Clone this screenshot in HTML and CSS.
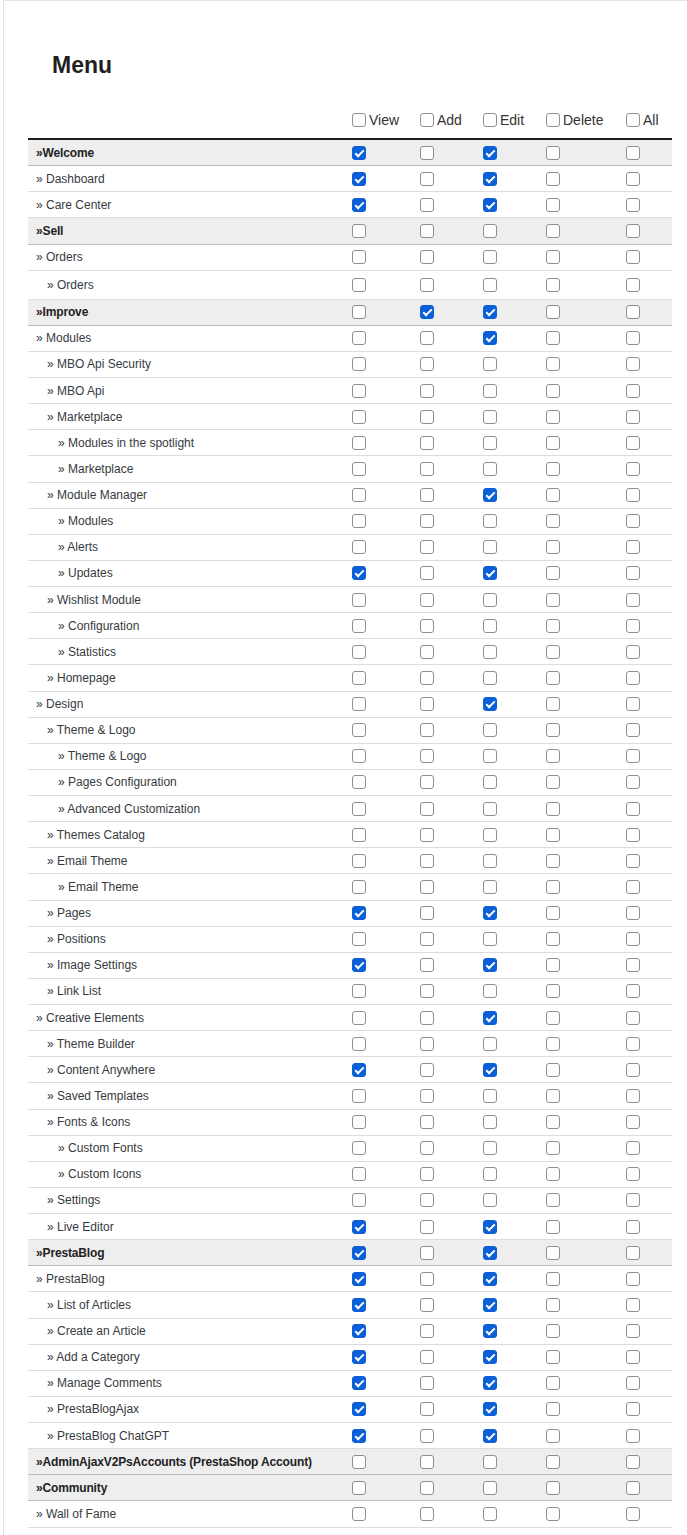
FILE: index.html
```html
<!DOCTYPE html>
<html>
<head>
<meta charset="utf-8">
<title>Menu</title>
<link rel="stylesheet" href="styles.css">
</head>
<body>
<div class="card">
  <h2 class="title">Menu</h2>
  <div class="perm">
    <div class="row head">
      <div class="name"></div>
      <label class="hcell"><input type="checkbox" class="cb"><span>View</span></label>
      <label class="hcell"><input type="checkbox" class="cb"><span>Add</span></label>
      <label class="hcell"><input type="checkbox" class="cb"><span>Edit</span></label>
      <label class="hcell"><input type="checkbox" class="cb"><span>Delete</span></label>
      <label class="hcell"><input type="checkbox" class="cb"><span>All</span></label>
    </div>

    <div class="row group"><div class="name">»Welcome</div><div class="c"><input type="checkbox" class="cb" checked></div><div class="c"><input type="checkbox" class="cb"></div><div class="c"><input type="checkbox" class="cb" checked></div><div class="c"><input type="checkbox" class="cb"></div><div class="c"><input type="checkbox" class="cb"></div></div>
    <div class="row l1"><div class="name">» Dashboard</div><div class="c"><input type="checkbox" class="cb" checked></div><div class="c"><input type="checkbox" class="cb"></div><div class="c"><input type="checkbox" class="cb" checked></div><div class="c"><input type="checkbox" class="cb"></div><div class="c"><input type="checkbox" class="cb"></div></div>
    <div class="row l1"><div class="name">» Care Center</div><div class="c"><input type="checkbox" class="cb" checked></div><div class="c"><input type="checkbox" class="cb"></div><div class="c"><input type="checkbox" class="cb" checked></div><div class="c"><input type="checkbox" class="cb"></div><div class="c"><input type="checkbox" class="cb"></div></div>

    <div class="row group"><div class="name">»Sell</div><div class="c"><input type="checkbox" class="cb"></div><div class="c"><input type="checkbox" class="cb"></div><div class="c"><input type="checkbox" class="cb"></div><div class="c"><input type="checkbox" class="cb"></div><div class="c"><input type="checkbox" class="cb"></div></div>
    <div class="row l1"><div class="name">» Orders</div><div class="c"><input type="checkbox" class="cb"></div><div class="c"><input type="checkbox" class="cb"></div><div class="c"><input type="checkbox" class="cb"></div><div class="c"><input type="checkbox" class="cb"></div><div class="c"><input type="checkbox" class="cb"></div></div>
    <div class="row l2 tall"><div class="name">» Orders</div><div class="c"><input type="checkbox" class="cb"></div><div class="c"><input type="checkbox" class="cb"></div><div class="c"><input type="checkbox" class="cb"></div><div class="c"><input type="checkbox" class="cb"></div><div class="c"><input type="checkbox" class="cb"></div></div>

    <div class="row group"><div class="name">»Improve</div><div class="c"><input type="checkbox" class="cb"></div><div class="c"><input type="checkbox" class="cb" checked></div><div class="c"><input type="checkbox" class="cb" checked></div><div class="c"><input type="checkbox" class="cb"></div><div class="c"><input type="checkbox" class="cb"></div></div>
    <div class="row l1"><div class="name">» Modules</div><div class="c"><input type="checkbox" class="cb"></div><div class="c"><input type="checkbox" class="cb"></div><div class="c"><input type="checkbox" class="cb" checked></div><div class="c"><input type="checkbox" class="cb"></div><div class="c"><input type="checkbox" class="cb"></div></div>
    <div class="row l2"><div class="name">» MBO Api Security</div><div class="c"><input type="checkbox" class="cb"></div><div class="c"><input type="checkbox" class="cb"></div><div class="c"><input type="checkbox" class="cb"></div><div class="c"><input type="checkbox" class="cb"></div><div class="c"><input type="checkbox" class="cb"></div></div>
    <div class="row l2"><div class="name">» MBO Api</div><div class="c"><input type="checkbox" class="cb"></div><div class="c"><input type="checkbox" class="cb"></div><div class="c"><input type="checkbox" class="cb"></div><div class="c"><input type="checkbox" class="cb"></div><div class="c"><input type="checkbox" class="cb"></div></div>
    <div class="row l2"><div class="name">» Marketplace</div><div class="c"><input type="checkbox" class="cb"></div><div class="c"><input type="checkbox" class="cb"></div><div class="c"><input type="checkbox" class="cb"></div><div class="c"><input type="checkbox" class="cb"></div><div class="c"><input type="checkbox" class="cb"></div></div>
    <div class="row l3"><div class="name">» Modules in the spotlight</div><div class="c"><input type="checkbox" class="cb"></div><div class="c"><input type="checkbox" class="cb"></div><div class="c"><input type="checkbox" class="cb"></div><div class="c"><input type="checkbox" class="cb"></div><div class="c"><input type="checkbox" class="cb"></div></div>
    <div class="row l3"><div class="name">» Marketplace</div><div class="c"><input type="checkbox" class="cb"></div><div class="c"><input type="checkbox" class="cb"></div><div class="c"><input type="checkbox" class="cb"></div><div class="c"><input type="checkbox" class="cb"></div><div class="c"><input type="checkbox" class="cb"></div></div>
    <div class="row l2"><div class="name">» Module Manager</div><div class="c"><input type="checkbox" class="cb"></div><div class="c"><input type="checkbox" class="cb"></div><div class="c"><input type="checkbox" class="cb" checked></div><div class="c"><input type="checkbox" class="cb"></div><div class="c"><input type="checkbox" class="cb"></div></div>
    <div class="row l3"><div class="name">» Modules</div><div class="c"><input type="checkbox" class="cb"></div><div class="c"><input type="checkbox" class="cb"></div><div class="c"><input type="checkbox" class="cb"></div><div class="c"><input type="checkbox" class="cb"></div><div class="c"><input type="checkbox" class="cb"></div></div>
    <div class="row l3"><div class="name">» Alerts</div><div class="c"><input type="checkbox" class="cb"></div><div class="c"><input type="checkbox" class="cb"></div><div class="c"><input type="checkbox" class="cb"></div><div class="c"><input type="checkbox" class="cb"></div><div class="c"><input type="checkbox" class="cb"></div></div>
    <div class="row l3"><div class="name">» Updates</div><div class="c"><input type="checkbox" class="cb" checked></div><div class="c"><input type="checkbox" class="cb"></div><div class="c"><input type="checkbox" class="cb" checked></div><div class="c"><input type="checkbox" class="cb"></div><div class="c"><input type="checkbox" class="cb"></div></div>
    <div class="row l2"><div class="name">» Wishlist Module</div><div class="c"><input type="checkbox" class="cb"></div><div class="c"><input type="checkbox" class="cb"></div><div class="c"><input type="checkbox" class="cb"></div><div class="c"><input type="checkbox" class="cb"></div><div class="c"><input type="checkbox" class="cb"></div></div>
    <div class="row l3"><div class="name">» Configuration</div><div class="c"><input type="checkbox" class="cb"></div><div class="c"><input type="checkbox" class="cb"></div><div class="c"><input type="checkbox" class="cb"></div><div class="c"><input type="checkbox" class="cb"></div><div class="c"><input type="checkbox" class="cb"></div></div>
    <div class="row l3"><div class="name">» Statistics</div><div class="c"><input type="checkbox" class="cb"></div><div class="c"><input type="checkbox" class="cb"></div><div class="c"><input type="checkbox" class="cb"></div><div class="c"><input type="checkbox" class="cb"></div><div class="c"><input type="checkbox" class="cb"></div></div>
    <div class="row l2"><div class="name">» Homepage</div><div class="c"><input type="checkbox" class="cb"></div><div class="c"><input type="checkbox" class="cb"></div><div class="c"><input type="checkbox" class="cb"></div><div class="c"><input type="checkbox" class="cb"></div><div class="c"><input type="checkbox" class="cb"></div></div>
    <div class="row l1"><div class="name">» Design</div><div class="c"><input type="checkbox" class="cb"></div><div class="c"><input type="checkbox" class="cb"></div><div class="c"><input type="checkbox" class="cb" checked></div><div class="c"><input type="checkbox" class="cb"></div><div class="c"><input type="checkbox" class="cb"></div></div>
    <div class="row l2"><div class="name">» Theme &amp; Logo</div><div class="c"><input type="checkbox" class="cb"></div><div class="c"><input type="checkbox" class="cb"></div><div class="c"><input type="checkbox" class="cb"></div><div class="c"><input type="checkbox" class="cb"></div><div class="c"><input type="checkbox" class="cb"></div></div>
    <div class="row l3"><div class="name">» Theme &amp; Logo</div><div class="c"><input type="checkbox" class="cb"></div><div class="c"><input type="checkbox" class="cb"></div><div class="c"><input type="checkbox" class="cb"></div><div class="c"><input type="checkbox" class="cb"></div><div class="c"><input type="checkbox" class="cb"></div></div>
    <div class="row l3"><div class="name">» Pages Configuration</div><div class="c"><input type="checkbox" class="cb"></div><div class="c"><input type="checkbox" class="cb"></div><div class="c"><input type="checkbox" class="cb"></div><div class="c"><input type="checkbox" class="cb"></div><div class="c"><input type="checkbox" class="cb"></div></div>
    <div class="row l3"><div class="name">» Advanced Customization</div><div class="c"><input type="checkbox" class="cb"></div><div class="c"><input type="checkbox" class="cb"></div><div class="c"><input type="checkbox" class="cb"></div><div class="c"><input type="checkbox" class="cb"></div><div class="c"><input type="checkbox" class="cb"></div></div>
    <div class="row l2"><div class="name">» Themes Catalog</div><div class="c"><input type="checkbox" class="cb"></div><div class="c"><input type="checkbox" class="cb"></div><div class="c"><input type="checkbox" class="cb"></div><div class="c"><input type="checkbox" class="cb"></div><div class="c"><input type="checkbox" class="cb"></div></div>
    <div class="row l2"><div class="name">» Email Theme</div><div class="c"><input type="checkbox" class="cb"></div><div class="c"><input type="checkbox" class="cb"></div><div class="c"><input type="checkbox" class="cb"></div><div class="c"><input type="checkbox" class="cb"></div><div class="c"><input type="checkbox" class="cb"></div></div>
    <div class="row l3"><div class="name">» Email Theme</div><div class="c"><input type="checkbox" class="cb"></div><div class="c"><input type="checkbox" class="cb"></div><div class="c"><input type="checkbox" class="cb"></div><div class="c"><input type="checkbox" class="cb"></div><div class="c"><input type="checkbox" class="cb"></div></div>
    <div class="row l2"><div class="name">» Pages</div><div class="c"><input type="checkbox" class="cb" checked></div><div class="c"><input type="checkbox" class="cb"></div><div class="c"><input type="checkbox" class="cb" checked></div><div class="c"><input type="checkbox" class="cb"></div><div class="c"><input type="checkbox" class="cb"></div></div>
    <div class="row l2"><div class="name">» Positions</div><div class="c"><input type="checkbox" class="cb"></div><div class="c"><input type="checkbox" class="cb"></div><div class="c"><input type="checkbox" class="cb"></div><div class="c"><input type="checkbox" class="cb"></div><div class="c"><input type="checkbox" class="cb"></div></div>
    <div class="row l2"><div class="name">» Image Settings</div><div class="c"><input type="checkbox" class="cb" checked></div><div class="c"><input type="checkbox" class="cb"></div><div class="c"><input type="checkbox" class="cb" checked></div><div class="c"><input type="checkbox" class="cb"></div><div class="c"><input type="checkbox" class="cb"></div></div>
    <div class="row l2"><div class="name">» Link List</div><div class="c"><input type="checkbox" class="cb"></div><div class="c"><input type="checkbox" class="cb"></div><div class="c"><input type="checkbox" class="cb"></div><div class="c"><input type="checkbox" class="cb"></div><div class="c"><input type="checkbox" class="cb"></div></div>
    <div class="row l1"><div class="name">» Creative Elements</div><div class="c"><input type="checkbox" class="cb"></div><div class="c"><input type="checkbox" class="cb"></div><div class="c"><input type="checkbox" class="cb" checked></div><div class="c"><input type="checkbox" class="cb"></div><div class="c"><input type="checkbox" class="cb"></div></div>
    <div class="row l2"><div class="name">» Theme Builder</div><div class="c"><input type="checkbox" class="cb"></div><div class="c"><input type="checkbox" class="cb"></div><div class="c"><input type="checkbox" class="cb"></div><div class="c"><input type="checkbox" class="cb"></div><div class="c"><input type="checkbox" class="cb"></div></div>
    <div class="row l2"><div class="name">» Content Anywhere</div><div class="c"><input type="checkbox" class="cb" checked></div><div class="c"><input type="checkbox" class="cb"></div><div class="c"><input type="checkbox" class="cb" checked></div><div class="c"><input type="checkbox" class="cb"></div><div class="c"><input type="checkbox" class="cb"></div></div>
    <div class="row l2"><div class="name">» Saved Templates</div><div class="c"><input type="checkbox" class="cb"></div><div class="c"><input type="checkbox" class="cb"></div><div class="c"><input type="checkbox" class="cb"></div><div class="c"><input type="checkbox" class="cb"></div><div class="c"><input type="checkbox" class="cb"></div></div>
    <div class="row l2"><div class="name">» Fonts &amp; Icons</div><div class="c"><input type="checkbox" class="cb"></div><div class="c"><input type="checkbox" class="cb"></div><div class="c"><input type="checkbox" class="cb"></div><div class="c"><input type="checkbox" class="cb"></div><div class="c"><input type="checkbox" class="cb"></div></div>
    <div class="row l3"><div class="name">» Custom Fonts</div><div class="c"><input type="checkbox" class="cb"></div><div class="c"><input type="checkbox" class="cb"></div><div class="c"><input type="checkbox" class="cb"></div><div class="c"><input type="checkbox" class="cb"></div><div class="c"><input type="checkbox" class="cb"></div></div>
    <div class="row l3"><div class="name">» Custom Icons</div><div class="c"><input type="checkbox" class="cb"></div><div class="c"><input type="checkbox" class="cb"></div><div class="c"><input type="checkbox" class="cb"></div><div class="c"><input type="checkbox" class="cb"></div><div class="c"><input type="checkbox" class="cb"></div></div>
    <div class="row l2"><div class="name">» Settings</div><div class="c"><input type="checkbox" class="cb"></div><div class="c"><input type="checkbox" class="cb"></div><div class="c"><input type="checkbox" class="cb"></div><div class="c"><input type="checkbox" class="cb"></div><div class="c"><input type="checkbox" class="cb"></div></div>
    <div class="row l2"><div class="name">» Live Editor</div><div class="c"><input type="checkbox" class="cb" checked></div><div class="c"><input type="checkbox" class="cb"></div><div class="c"><input type="checkbox" class="cb" checked></div><div class="c"><input type="checkbox" class="cb"></div><div class="c"><input type="checkbox" class="cb"></div></div>

    <div class="row group"><div class="name">»PrestaBlog</div><div class="c"><input type="checkbox" class="cb" checked></div><div class="c"><input type="checkbox" class="cb"></div><div class="c"><input type="checkbox" class="cb" checked></div><div class="c"><input type="checkbox" class="cb"></div><div class="c"><input type="checkbox" class="cb"></div></div>
    <div class="row l1"><div class="name">» PrestaBlog</div><div class="c"><input type="checkbox" class="cb" checked></div><div class="c"><input type="checkbox" class="cb"></div><div class="c"><input type="checkbox" class="cb" checked></div><div class="c"><input type="checkbox" class="cb"></div><div class="c"><input type="checkbox" class="cb"></div></div>
    <div class="row l2"><div class="name">» List of Articles</div><div class="c"><input type="checkbox" class="cb" checked></div><div class="c"><input type="checkbox" class="cb"></div><div class="c"><input type="checkbox" class="cb" checked></div><div class="c"><input type="checkbox" class="cb"></div><div class="c"><input type="checkbox" class="cb"></div></div>
    <div class="row l2"><div class="name">» Create an Article</div><div class="c"><input type="checkbox" class="cb" checked></div><div class="c"><input type="checkbox" class="cb"></div><div class="c"><input type="checkbox" class="cb" checked></div><div class="c"><input type="checkbox" class="cb"></div><div class="c"><input type="checkbox" class="cb"></div></div>
    <div class="row l2"><div class="name">» Add a Category</div><div class="c"><input type="checkbox" class="cb" checked></div><div class="c"><input type="checkbox" class="cb"></div><div class="c"><input type="checkbox" class="cb" checked></div><div class="c"><input type="checkbox" class="cb"></div><div class="c"><input type="checkbox" class="cb"></div></div>
    <div class="row l2"><div class="name">» Manage Comments</div><div class="c"><input type="checkbox" class="cb" checked></div><div class="c"><input type="checkbox" class="cb"></div><div class="c"><input type="checkbox" class="cb" checked></div><div class="c"><input type="checkbox" class="cb"></div><div class="c"><input type="checkbox" class="cb"></div></div>
    <div class="row l2"><div class="name">» PrestaBlogAjax</div><div class="c"><input type="checkbox" class="cb" checked></div><div class="c"><input type="checkbox" class="cb"></div><div class="c"><input type="checkbox" class="cb" checked></div><div class="c"><input type="checkbox" class="cb"></div><div class="c"><input type="checkbox" class="cb"></div></div>
    <div class="row l2"><div class="name">» PrestaBlog ChatGPT</div><div class="c"><input type="checkbox" class="cb" checked></div><div class="c"><input type="checkbox" class="cb"></div><div class="c"><input type="checkbox" class="cb" checked></div><div class="c"><input type="checkbox" class="cb"></div><div class="c"><input type="checkbox" class="cb"></div></div>

    <div class="row group"><div class="name">»AdminAjaxV2PsAccounts (PrestaShop Account)</div><div class="c"><input type="checkbox" class="cb"></div><div class="c"><input type="checkbox" class="cb"></div><div class="c"><input type="checkbox" class="cb"></div><div class="c"><input type="checkbox" class="cb"></div><div class="c"><input type="checkbox" class="cb"></div></div>

    <div class="row group"><div class="name">»Community</div><div class="c"><input type="checkbox" class="cb"></div><div class="c"><input type="checkbox" class="cb"></div><div class="c"><input type="checkbox" class="cb"></div><div class="c"><input type="checkbox" class="cb"></div><div class="c"><input type="checkbox" class="cb"></div></div>
    <div class="row l1"><div class="name">» Wall of Fame</div><div class="c"><input type="checkbox" class="cb"></div><div class="c"><input type="checkbox" class="cb"></div><div class="c"><input type="checkbox" class="cb"></div><div class="c"><input type="checkbox" class="cb"></div><div class="c"><input type="checkbox" class="cb"></div></div>
  </div>
</div>
</body>
</html>
```

FILE: styles.css
```css
html, body {
  margin: 0;
  padding: 0;
  background: #ffffff;
}

body {
  font-family: "Liberation Sans", Arial, sans-serif;
  color: #363a41;
  font-size: 12px;
}

.card {
  margin-left: 3px;
  min-height: 1535px;
  box-sizing: border-box;
  border-left: 1px solid #e3e3e3;
  border-top: 1px solid #e3e3e3;
  padding: 0 15px 0 24px;
}

.title {
  margin: 50px 0 0 24px;
  font-size: 23px;
  line-height: 28px;
  font-weight: bold;
  color: #1f1f1f;
}

.perm {
  margin-top: 21px;
  width: 644px;
}

.row {
  display: grid;
  grid-template-columns: 324px 68px 63px 63px 80px 46px;
  align-items: center;
  box-sizing: border-box;
  height: 26.13px;
  border-bottom: 1px solid #dddddd;
}

.row.head {
  height: 40px;
  border-bottom: 2px solid #1f1f1f;
}

.row.tall {
  height: 29px;
}

.row.group {
  background: #eeeeee;
  border-bottom-color: #bdbdbd;
}

.row.group .name {
  font-weight: bold;
  color: #222222;
  letter-spacing: -0.15px;
}

.name {
  padding-left: 8px;
  white-space: nowrap;
}

.l2 .name {
  padding-left: 19px;
}

.l3 .name {
  padding-left: 30px;
}

.c {
  display: flex;
  align-items: center;
}

.hcell {
  display: flex;
  align-items: center;
  gap: 3px;
  font-size: 14px;
  color: #333333;
  padding-top: 1px;
}

.cb {
  appearance: none;
  -webkit-appearance: none;
  display: block;
  position: relative;
  width: 14px;
  height: 14px;
  margin: 0;
  box-sizing: border-box;
  border: 1px solid #8e8e99;
  border-radius: 3px;
  background: #ffffff;
}

.cb:checked {
  background: #0b5fd7;
  border-color: #0b5fd7;
}

.cb:checked::after {
  content: "";
  position: absolute;
  left: 4px;
  top: 1px;
  width: 3px;
  height: 7px;
  border: solid #ffffff;
  border-width: 0 2px 2px 0;
  transform: rotate(45deg);
}
```
